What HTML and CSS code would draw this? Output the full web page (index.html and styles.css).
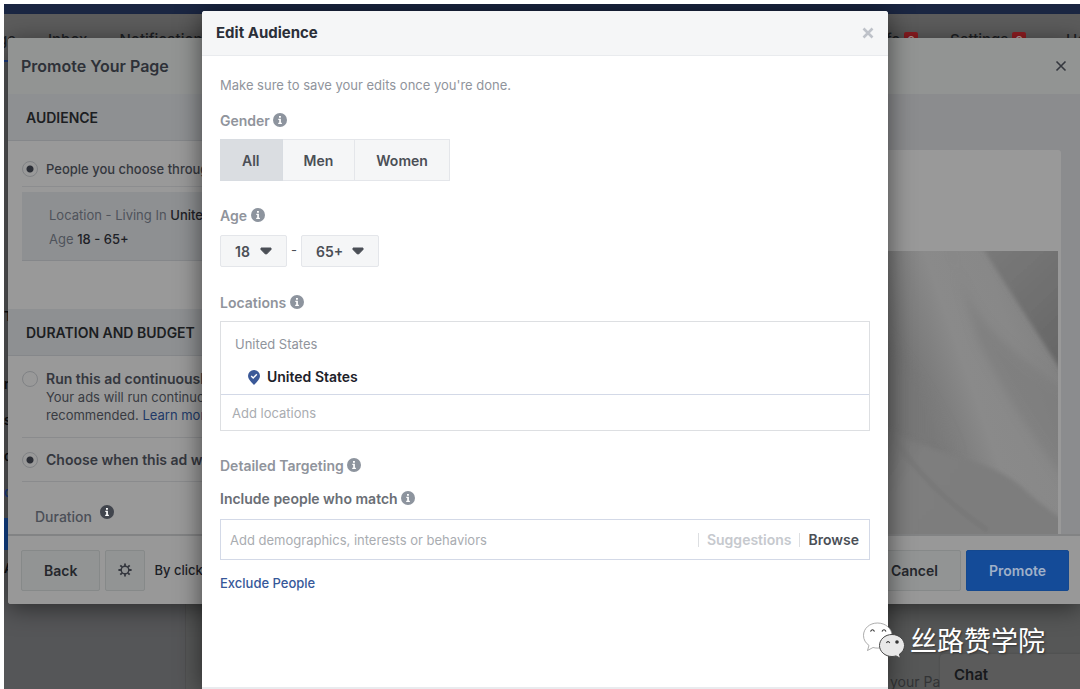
FILE: index.html
```html
<!DOCTYPE html>
<html lang="en">
<head>
    <meta charset="UTF-8">
    <meta name="viewport" content="width=device-width, initial-scale=1.0">
    <title>Promote Your Page</title>
    <link rel="stylesheet" href="styles.css">
</head>
<body>
    <!-- Info icon used by all the labels -->
    <svg class="defs" width="0" height="0">
        <symbol id="info" viewBox="0 0 14 14">
            <circle cx="7" cy="7" r="7" fill="currentColor"/>
            <path class="info-mark" d="M5.3 5.8h2.6v4h1v1.1H5.2V9.8h1V6.9h-.9zM6 3h1.9v1.8H6z"/>
        </symbol>
    </svg>

    <div class="stage">
        <!-- Page behind the dialogs -->
        <div class="topbar"></div>
        <nav class="tabs">
            <a href="#" class="tab active">Page</a>
            <a href="#" class="tab">Inbox</a>
            <a href="#" class="tab">Notifications</a>
            <a href="#" class="tab tab-right">Page Info <span class="count">9</span></a>
            <a href="#" class="tab">Settings <span class="count">9</span></a>
            <a href="#" class="tab">Help</a>
        </nav>
        <div class="page">
            <div class="page-side">
                <p class="page-title">T</p>
                <p>n</p>
                <p>s</p>
                <p>c</p>
                <p class="blue">c</p>
                <button class="page-button" aria-label="Promote"></button>
                <p>A</p>
            </div>
            <div class="page-main">
                <p class="page-note">your Page</p>
            </div>
        </div>
        <div class="chat">Chat</div>

        <section class="promote">
            <header class="promote-header">
                <h1>Promote Your Page</h1>
                <button class="close" aria-label="Close">
                    <svg width="12" height="12" viewBox="0 0 12 12"><path d="M1.5 1.5l9 9M10.5 1.5l-9 9" stroke="currentColor" stroke-width="1.6"/></svg>
                </button>
            </header>
            <div class="promote-body">
                <div class="settings">
                    <h2>AUDIENCE</h2>
                    <div class="group">
                        <label class="option first"><input type="radio" name="audience" checked> People you choose through targeting</label>
                        <div class="summary">
                            <p>Location - Living In <b>United States</b></p>
                            <p>Age <b>18 - 65+</b></p>
                        </div>
                    </div>
                    <h2>DURATION AND BUDGET</h2>
                    <div class="group">
                        <label class="option"><input type="radio" name="duration"> Run this ad continuously</label>
                        <div class="hint">
                            <p>Your ads will run continuously</p>
                            <p>recommended. <a href="#">Learn more</a></p>
                        </div>
                        <label class="option choose"><input type="radio" name="duration" checked> Choose when this ad will end</label>
                        <div class="duration">Duration <svg class="info"><use href="#info"/></svg></div>
                    </div>
                </div>
                <div class="preview">
                    <div class="card">
                        <svg class="photo" viewBox="0 0 520 283" preserveAspectRatio="xMaxYMin slice">
                            <defs>
                                <linearGradient id="base" gradientUnits="userSpaceOnUse" x1="350" y1="60" x2="520" y2="0">
                                    <stop offset="0" stop-color="#767676"/>
                                    <stop offset="0.3" stop-color="#8a8a8a"/>
                                    <stop offset="0.6" stop-color="#888"/>
                                    <stop offset="1" stop-color="#7c7c7c"/>
                                </linearGradient>
                                <linearGradient id="corner" x1="0" y1="0" x2="0.6" y2="1">
                                    <stop offset="0" stop-color="#7b7b7b"/>
                                    <stop offset="1" stop-color="#666"/>
                                </linearGradient>
                                <linearGradient id="fold" x1="0" y1="0" x2="1" y2="0">
                                    <stop offset="0" stop-color="#6c6c6c"/>
                                    <stop offset="1" stop-color="#868686" stop-opacity="0"/>
                                </linearGradient>
                                <linearGradient id="low" x1="0" y1="0" x2="1" y2="0.4">
                                    <stop offset="0" stop-color="#707070"/>
                                    <stop offset="0.3" stop-color="#7e7e7e"/>
                                    <stop offset="1" stop-color="#7d7d7d"/>
                                </linearGradient>
                                <filter id="soft"><feGaussianBlur stdDeviation="5"/></filter>
                                <filter id="crease"><feGaussianBlur stdDeviation="2"/></filter>
                            </defs>
                            <rect width="520" height="283" fill="url(#base)"/>
                            <path d="M410 -10Q425 50 455 80T535 145V240Q480 170 440 90z" fill="#787878" opacity="0.5" filter="url(#soft)"/>
                            <path d="M335 70Q385 120 425 205L335 180z" fill="url(#fold)" filter="url(#soft)"/>
                            <g filter="url(#crease)">
                                <path d="M440 -10Q475 45 535 138V-10z" fill="url(#corner)"/>
                                <path d="M335 172Q375 192 420 205T485 237T535 275V295H335z" fill="url(#low)"/>
                                <path d="M350 178Q385 235 450 280" fill="none" stroke="#757575" stroke-width="3"/>
                            </g>
                        </svg>
                    </div>
                </div>
            </div>
            <footer class="promote-footer">
                <button class="button back">Back</button>
                <button class="button gear" aria-label="Settings">
                    <svg width="14" height="14" viewBox="0 0 14 14" fill="none" stroke="currentColor">
                        <circle cx="7" cy="7" r="3.8" stroke-width="1.4"/>
                        <path d="M7 .4v2.6M7 11v2.6M.4 7h2.600M11 7h2.600M2.300 2.300l1.900 1.900M9.800 9.800l1.900 1.900M11.700 2.300L9.800 4.200M4.200 9.800l-1.900 1.900" stroke-width="1.800"/>
                    </svg>
                </button>
                <span class="terms">By clicking Promote</span>
                <button class="button cancel">Cancel</button>
                <button class="button primary">Promote</button>
            </footer>
        </section>

        <!-- Edit audience dialog -->
        <div class="overlay">
            <section class="modal">
                <header class="modal-header">
                    <h1>Edit Audience</h1>
                    <button class="close" aria-label="Close">
                        <svg width="12" height="12" viewBox="0 0 12 12"><path d="M1.5 1.5l9 9M10.5 1.5l-9 9" stroke="currentColor" stroke-width="2.6"/></svg>
                    </button>
                </header>
                <div class="modal-body">
                    <p class="intro">Make sure to save your edits once you're done.</p>

                    <h3>Gender <svg class="info"><use href="#info"/></svg></h3>
                    <div class="genders">
                        <button class="selected">All</button>
                        <button>Men</button>
                        <button>Women</button>
                    </div>

                    <h3>Age <svg class="info"><use href="#info"/></svg></h3>
                    <div class="ages">
                        <span class="select">
                            <select class="age-min" aria-label="Minimum age"><option>18</option></select>
                            <svg class="arrow" viewBox="0 0 12 8"><path d="M1 1h10v1.5L6.6 7H5.4L1 2.5z" fill="currentColor" stroke="currentColor" stroke-linejoin="round"/></svg>
                        </span>
                        <span class="dash">-</span>
                        <span class="select">
                            <select class="age-max" aria-label="Maximum age"><option>65+</option></select>
                            <svg class="arrow" viewBox="0 0 12 8"><path d="M1 1h10v1.5L6.6 7H5.4L1 2.5z" fill="currentColor" stroke="currentColor" stroke-linejoin="round"/></svg>
                        </span>
                    </div>

                    <h3><label for="locations">Locations</label> <svg class="info"><use href="#info"/></svg></h3>
                    <div class="locations">
                        <p class="country">United States</p>
                        <p class="place">
                            <svg width="12" height="15" viewBox="0 0 12 15"><path d="M6 0a6 6 0 0 1 6 6c0 3-2.500 5-3.600 6.400L6 15l-2.400-2.600C2.500 11 0 9 0 6a6 6 0 0 1 6-6z" fill="#3b5998"/><path d="M3.200 6l2 2 3.600-3.800" fill="none" stroke="#fff" stroke-width="1.400"/></svg>
                            United States
                        </p>
                        <input type="text" id="locations" placeholder="Add locations">
                    </div>

                    <h3>Detailed Targeting <svg class="info"><use href="#info"/></svg></h3>
                    <h4><label for="targeting">Include people who match</label> <svg class="info"><use href="#info"/></svg></h4>
                    <div class="targeting">
                        <input type="text" id="targeting" placeholder="Add demographics, interests or behaviors">
                        <button class="suggestions">Suggestions</button>
                        <button class="browse">Browse</button>
                    </div>
                    <a href="#" class="exclude">Exclude People</a>
                </div>
                <footer class="modal-footer"></footer>
            </section>
        </div>

        <div class="watermark">
            <svg width="44" height="38" viewBox="0 0 44 38">
                <path d="M15.500 2C7.500 2 1.500 7.500 1.500 14.500c0 4.200 2.200 7.600 5.500 9.900L5.500 29.500l5.500-3c1.500.4 3 .6 4.500.6 8 0 14.500-5.600 14.500-12.600S23.500 2 15.500 2z" fill="#fff" stroke="#888" stroke-width="0.700"/>
                <path d="M8.500 10.500q2-3.500 4 0M20 10.500q2-3.500 4 0" fill="none" stroke="#333" stroke-width="1.200"/>
                <path d="M30 13.500c-7 0-12.500 5-12.500 11S23 35.500 30 35.500c1.400 0 2.700-.2 4-.6l4.600 2.500-1.200-4.200c3.200-2 5.100-5.200 5.100-8.700 0-6-5.500-11-12.500-11z" fill="#e8e8e8" stroke="#444" stroke-width="1"/>
                <path d="M24.500 22q1.500-3 3.200 0" fill="none" stroke="#333" stroke-width="1.200"/>
                <circle cx="35" cy="21" r="1.800" fill="#333"/>
            </svg>
            <span lang="zh-CN">丝路赞学院</span>
        </div>
    </div>
</body>
</html>
```
FILE: styles.css
```css
* {
    box-sizing: border-box;
}

body {
    font-family: Inter, "Liberation Sans", sans-serif;
    font-size: 13px;
    line-height: 20px;
    color: #1d2129;
    background-color: #fff;
    margin: 0;
    padding: 4px 0 0 4px;
}

h1, h2, h3, h4, p {
    margin: 0;
}

a {
    color: #365899;
    text-decoration: none;
}

button, input, select {
    font-family: inherit;
    font-size: 13px;
    cursor: pointer;
}

.defs {
    position: absolute;
}

.stage {
    position: relative;
    display: flex;
    flex-direction: column;
    min-height: calc(100vh - 4px);
    overflow: hidden;
    background-color: #555658;
}

/* page behind */
.topbar {
    height: 10px;
    background-color: #1a2642;
}

.tabs {
    display: flex;
    gap: 32px;
    height: 48px;
    padding-top: 16px;
    background-color: #5c5c5c;
    white-space: nowrap;
}

.tab {
    font-size: 15px;
    font-weight: 500;
    color: #1d1f23;
}

.tab.active {
    width: 12px;
    height: 32px;
    direction: rtl;
    border-bottom: 2px solid #1c3a80;
}

.tab-right {
    margin-left: auto;
}

.tab:last-child {
    width: 14px;
    margin-left: 8px;
}

.count {
    padding: 1px 3px;
    border-radius: 2px;
    background-color: #8f1d22;
    color: #b9a0a0;
    font-size: 12px;
}

.page {
    display: flex;
    flex: 1;
}

.page-side {
    width: 182px;
    padding-top: 244px;
    border-right: 1px solid #4f4f50;
    font-weight: 600;
    color: #0c0d10;
}

.page-side p {
    margin-bottom: 16px;
    line-height: 20px;
}

.page-side .page-title {
    margin-bottom: 48px;
}

.page-side .blue {
    color: #1c3a80;
}

.page-button {
    display: block;
    width: 100px;
    height: 32px;
    margin-bottom: 8px;
    border: none;
    background-color: #11418a;
}

.page-main {
    display: flex;
    flex: 1;
    align-items: flex-end;
    justify-content: flex-end;
    background-color: #565757;
}

.page-note {
    width: 190px;
    font-size: 14px;
    line-height: 14px;
    color: #323335;
}

.chat {
    position: absolute;
    right: 0;
    bottom: 0;
    width: 140px;
    padding: 11px 14px 4px;
    border-radius: 4px 0 0 0;
    background-color: #5b5b5b;
    box-shadow: 0 0 2px #444;
    font-size: 15px;
    font-weight: 600;
    color: #17191c;
}

/* promote dialog */
.promote {
    position: absolute;
    top: 34px;
    left: 4px;
    right: 0;
    border-radius: 3px 0 0 3px;
    overflow: hidden;
    background-color: #999;
    box-shadow: 0 4px 24px rgba(0, 0, 0, 0.5);
    color: #2e3138;
    white-space: nowrap;
}

.promote-header {
    display: flex;
    align-items: center;
    justify-content: space-between;
    height: 56px;
    padding: 0 13px;
    background-color: #929493;
}

.promote-header h1 {
    font-size: 16px;
    font-weight: 600;
}

.close {
    display: flex;
    padding: 0;
    border: none;
    background: none;
    color: #34373e;
}

.promote-body {
    display: flex;
}

.settings {
    width: 50%;
}

.settings h2 {
    padding: 14px 18px 12px;
    border-bottom: 1px solid #85878a;
    background-color: #8e9092;
    font-size: 14px;
    font-weight: 600;
    line-height: 20px;
    color: #1c1e22;
}

.group {
    padding: 0 14px;
}

.option {
    display: flex;
    align-items: center;
    gap: 8px;
    height: 46px;
    font-size: 14px;
    font-weight: 600;
    color: #34373e;
}

.option.first {
    padding-top: 10px;
    border-bottom: 1px solid #8c8d8f;
    font-size: 13px;
    font-weight: 500;
}

.option input {
    appearance: none;
    width: 16px;
    height: 16px;
    margin: 0;
    border: 1px solid #808285;
    border-radius: 50%;
    background-color: #999;
}

.option input:checked {
    background: radial-gradient(circle, #2b2e36 3px, #999 4px);
}

.summary {
    margin: 5px 0 48px;
    padding: 11px 27px 9px;
    border-bottom: 1px solid #85878a;
    background-color: #8e9092;
    line-height: 24px;
    color: #4f535b;
}

.summary b {
    font-weight: 500;
    color: #1d2026;
}

.hint {
    margin-top: -14px;
    padding: 0 0 13px 24px;
    border-bottom: 1px solid #8a8b8d;
    line-height: 18px;
    color: #383b42;
}

.hint a {
    color: #213968;
}

.option.choose {
    height: 44px;
    border-bottom: 1px solid #8a8b8d;
}

.duration {
    padding: 23px 13px 5px;
    font-size: 14px;
    font-weight: 500;
    color: #4b4f57;
}

.duration .info {
    margin: 0 0 4px 4px;
    color: #41454d;
}

.preview {
    display: flex;
    flex: 1;
    padding: 56px 19px 0 19px;
    background-color: #8b8c8e;
}

.card {
    display: flex;
    flex: 1;
    padding: 101px 3px 0 0;
    border-radius: 3px 3px 0 0;
    background-color: #999;
}

.photo {
    flex: 1;
    width: 100%;
    height: 283px;
}

.promote-footer {
    display: flex;
    align-items: center;
    gap: 5px;
    height: 70px;
    padding: 0 11px 0 13px;
    border-top: 2px solid #828384;
    background-color: #989898;
}

.button {
    height: 41px;
    padding: 0 22px;
    border: 1px solid #868989;
    border-radius: 2px;
    background-color: #929494;
    font-size: 14px;
    font-weight: 600;
    color: #25272c;
}

.button.gear {
    padding: 0 12px;
    color: #34373e;
}

.gear svg {
    display: block;
}

.terms {
    flex: 1;
    padding-left: 4px;
    font-weight: 500;
    color: #1d2026;
}

.button.primary {
    border-color: #14488f;
    background-color: #144b98;
    color: #9fb0c8;
}

/* edit audience dialog */
.overlay {
    position: absolute;
    top: 7px;
    bottom: 0;
    left: 0;
    right: 0;
    display: flex;
    padding: 0 192px 0 198px;
}

.modal {
    display: flex;
    flex: 1;
    flex-direction: column;
    border-radius: 3px 3px 0 0;
    background-color: #fff;
    box-shadow: 0 2px 26px rgba(0, 0, 0, 0.55);
}

.modal-header {
    display: flex;
    align-items: center;
    justify-content: space-between;
    height: 45px;
    padding: 0 14px;
    border-bottom: 1px solid #e9ebee;
    border-radius: 3px 3px 0 0;
    background-color: #f5f6f7;
}

.modal-header h1 {
    font-size: 15px;
    font-weight: 700;
    color: #2b2f38;
}

.modal-header .close {
    color: #bec2c9;
}

.modal-body {
    flex: 1;
    padding: 19px 18px;
}

.intro {
    margin-bottom: 16px;
    color: #90949c;
}

.modal h3, .modal h4 {
    margin-bottom: 8px;
    font-size: 14px;
    font-weight: 600;
    line-height: 20px;
    color: #90949c;
}

.modal h4 {
    margin: 13px 0 10px;
    color: #6a6e75;
}

.info {
    width: 14px;
    height: 14px;
    vertical-align: -1px;
    color: #8d949e;
}

.info-mark {
    fill: #fff;
}

.duration .info-mark {
    fill: #999;
}

.genders {
    display: flex;
    margin-bottom: 25px;
}

.genders button {
    height: 42px;
    padding: 0 21px;
    border: 1px solid #e4e6ea;
    border-left: none;
    background-color: #f5f6f7;
    font-size: 14px;
    font-weight: 600;
    color: #4b4f56;
}

.genders button.selected {
    padding: 0 22px;
    border-color: #d8dce1;
    background-color: #dadde1;
}

.ages {
    display: flex;
    margin-bottom: 26px;
    padding-top: 1px;
}

.select {
    position: relative;
}

.select select {
    appearance: none;
    display: block;
    height: 32px;
    padding: 0 14px;
    border: 1px solid #e4e6ea;
    border-radius: 2px;
    background-color: #f5f6f7;
    font-size: 14px;
    font-weight: 600;
    color: #4b4f56;
}

.age-min {
    width: 67px;
}

.age-max {
    width: 78px;
}

.arrow {
    position: absolute;
    top: 12px;
    right: 15px;
    width: 12px;
    height: 8px;
    color: #4b4f56;
    pointer-events: none;
}

.dash {
    width: 14px;
    line-height: 30px;
    text-align: center;
    color: #4b4f56;
}

.locations {
    margin-bottom: 25px;
    border: 1px solid #dddfe2;
}

.country {
    padding: 12px 14px 0;
    color: #90949c;
}

.place {
    display: flex;
    align-items: center;
    gap: 7px;
    padding: 13px 27px 7px;
    font-size: 14px;
    font-weight: 600;
    color: #1d2129;
}

.locations input {
    display: block;
    width: 100%;
    height: 36px;
    padding: 0 11px;
    border: none;
    border-top: 1px solid #d3d9e7;
}

.modal input::placeholder {
    color: #a9acb1;
    opacity: 1;
}

.targeting {
    display: flex;
    align-items: center;
    height: 41px;
    margin-bottom: 13px;
    padding-right: 2px;
    border: 1px solid #d3d9e7;
}

.targeting input {
    flex: 1;
    min-width: 0;
    padding: 0 9px;
    border: none;
}

.targeting button {
    height: 14px;
    padding: 0 8px;
    border: none;
    border-left: 1px solid #dddfe2;
    background: none;
    font-size: 14px;
    font-weight: 600;
    line-height: 14px;
}

.targeting .suggestions {
    color: #c6c9ce;
}

.targeting .browse {
    color: #4b4f56;
}

.exclude {
    font-weight: 500;
}

.modal-footer {
    height: 2px;
    background-color: #e9ebee;
}

.watermark {
    position: absolute;
    right: 35px;
    bottom: 30px;
    display: flex;
    align-items: center;
    gap: 4px;
    font-family: "Noto Sans CJK SC", sans-serif;
    font-size: 27px;
    line-height: 38px;
    color: #fff;
    text-shadow: 1px 1px 2px #333;
}
```
